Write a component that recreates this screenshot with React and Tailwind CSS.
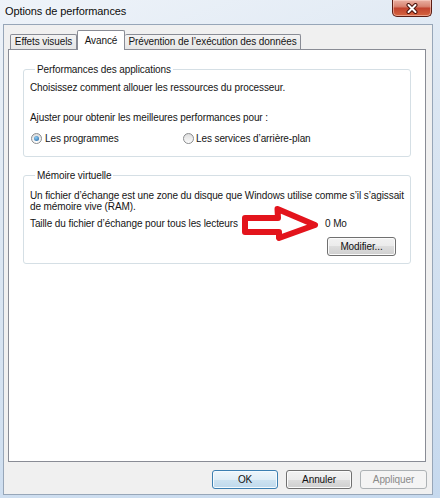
import React from 'react'

const btn =
  'h-[19px] rounded-[3px] border border-[#707070] bg-[linear-gradient(#f2f2f2,#ebebeb_50%,#dddddd_50%,#cfcfcf)] shadow-[inset_0_0_0_1px_#fbfbfb] flex items-center justify-center text-[10px] leading-none text-[#111]'

function Radio({ checked }) {
  return (
    <span className="w-[11px] h-[11px] rounded-full border border-[#8a8c8e] bg-[linear-gradient(#dcdcdc,#ffffff)] flex items-center justify-center shrink-0">
      {checked ? (
        <span className="w-[5px] h-[5px] rounded-full bg-[radial-gradient(circle_at_40%_35%,#8fcdf5,#1d5e9b)]" />
      ) : (
        <span className="w-[7px] h-[7px] rounded-full bg-[linear-gradient(#e2e2e2,#f7f7f7)]" />
      )}
    </span>
  )
}

function Arrow() {
  return (
    <svg
      width="82"
      height="40"
      viewBox="0 0 82 40"
      className="absolute left-[209px] top-[-13px] pointer-events-none"
    >
      <path
        d="M6 14 L39 14 L38.5 5 L76 21 L40 34 L40 28 L6 28 Z"
        fill="#ffffff"
        stroke="#e3141c"
        strokeWidth="6"
        strokeLinejoin="round"
      />
    </svg>
  )
}

export default function App() {
  return (
    <div className="w-[440px] h-[498px] flex flex-col pl-[3px] pr-[7px] pb-[3px] bg-[linear-gradient(160deg,#eef3f9,#dbe6f2_40%,#c6d9ee)] font-['Liberation_Sans',Arial,sans-serif] tracking-[-0.1px] text-[#151515]">
      {/* title bar */}
      <div className="h-[24px] flex items-start justify-between shrink-0">
        <div className="pl-[2px] pt-[5px] text-[11px] leading-[13px] text-[#0c0c0c] [text-shadow:0_0_6px_#ffffff]">
          Options de performances
        </div>
        <div className="mr-[1px] w-[40px] h-[17px] rounded-b-[5px] border border-t-0 border-[#5b1d14] bg-[linear-gradient(#eab0a3,#d88472_40%,#c2442f_52%,#d5653f)] shadow-[inset_0_0_0_1px_rgba(255,220,210,0.5)] flex items-center justify-center">
          <svg width="14" height="11" viewBox="0 0 14 11">
            <path d="M3.5 2 L10.5 9 M10.5 2 L3.5 9" stroke="#4a120b" strokeWidth="4" strokeLinecap="round" />
            <path d="M3.5 2 L10.5 9 M10.5 2 L3.5 9" stroke="#ffffff" strokeWidth="2" strokeLinecap="round" />
          </svg>
        </div>
      </div>

      {/* client area */}
      <div className="flex-1 flex flex-col bg-[#f0f0f0] border border-[#97a6b8]">
        <div className="ml-[4px] mr-[6px] pt-[5px] flex-1 flex flex-col">
          {/* tabs */}
          <div className="h-[19px] flex items-end pl-[2px] text-[10px] leading-none">
            <div className="w-[67px] h-[15px] border border-b-0 border-[#898c95] rounded-t-[2px] bg-[linear-gradient(#f3f3f3,#e6e6e6)] flex items-center justify-center">
              Effets visuels
            </div>
            <div className="relative z-10 w-[48px] h-[20px] mb-[-1px] border border-b-0 border-[#898c95] rounded-t-[2px] bg-white flex items-start justify-center pt-[5px]">
              Avancé
            </div>
            <div className="w-[176px] h-[15px] border border-b-0 border-l-0 border-[#898c95] rounded-t-[2px] bg-[linear-gradient(#f3f3f3,#e6e6e6)] flex items-center justify-center">
              Prévention de l’exécution des données
            </div>
          </div>

          {/* tab panel */}
          <div className="flex-1 bg-white border border-[#898c95] text-[10px]">
            <fieldset className="mx-[14px] mt-[13px] border border-[#d5dfe5] rounded-[3px] pl-[6px] pr-[6px] pb-[11px]">
              <legend className="ml-[5px] px-[2px] leading-[13px]">Performances des applications</legend>
              <div className="mt-[5px] leading-[13px]">Choisissez comment allouer les ressources du processeur.</div>
              <div className="mt-[17px] leading-[13px]">Ajuster pour obtenir les meilleures performances pour :</div>
              <div className="mt-[8px] flex items-center leading-[13px]">
                <div className="w-[153px] flex items-center gap-[3px] pl-[1px]">
                  <Radio checked />
                  <span>Les programmes</span>
                </div>
                <div className="flex items-center gap-[2px]">
                  <Radio />
                  <span>Les services d’arrière-plan</span>
                </div>
              </div>
            </fieldset>

            <fieldset className="mx-[14px] mt-[12px] border border-[#d5dfe5] rounded-[3px] pl-[6px] pr-[6px] pb-[7px]">
              <legend className="ml-[5px] px-[2px] leading-[13px]">Mémoire virtuelle</legend>
              <div className="mt-[8px] leading-[11px]">
                Un fichier d’échange est une zone du disque que Windows utilise comme s’il s’agissait
                <br />
                de mémoire vive (RAM).
              </div>
              <div className="relative mt-[5px] flex leading-[13px]">
                <span className="w-[295px]">Taille du fichier d’échange pour tous les lecteurs</span>
                <span>0 Mo</span>
                <Arrow />
              </div>
              <div className="mt-[7px] flex justify-end pr-[8px]">
                <div className={`${btn} w-[69px] h-[18px]`}>Modifier...</div>
              </div>
            </fieldset>
          </div>
        </div>

        {/* dialog buttons */}
        <div className="mt-[8px] mb-[5px] mr-[5px] flex justify-end gap-[8px]">
          <div className="w-[66px] h-[19px] rounded-[3px] border border-[#3c7fb1] bg-[linear-gradient(#eef6fb,#e0eef7_50%,#cde3f1_50%,#bfd9ec)] shadow-[inset_0_0_0_1px_#f4fbff] flex items-center justify-center text-[10px] leading-none text-[#111]">
            OK
          </div>
          <div className={`${btn} w-[66px]`}>Annuler</div>
          <div className="w-[67px] h-[19px] rounded-[3px] border border-[#adb2b5] bg-[#f4f4f4] flex items-center justify-center text-[10px] leading-none text-[#8a8a8a]">
            Appliquer
          </div>
        </div>
      </div>
    </div>
  )
}
